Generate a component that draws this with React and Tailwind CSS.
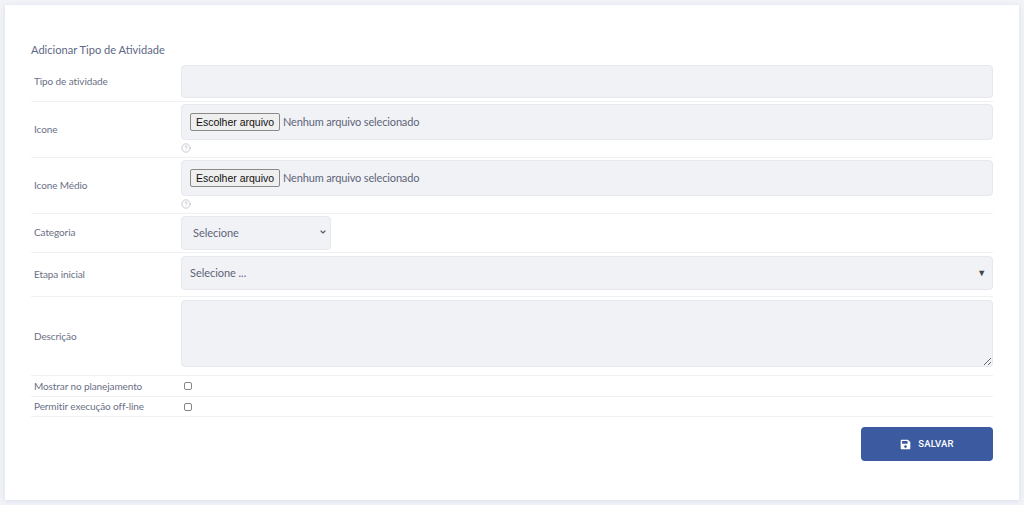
import { FaSave } from 'react-icons/fa';
import { ChevronDown, CircleHelp } from 'lucide-react';

const labelCls = 'w-[150px] shrink-0 pl-[3px] text-[10px] tracking-[-0.1px] text-[#6a7085]';
const fieldCls = 'bg-[#f1f2f6] border border-[#e6e8ef] rounded-[4px] text-[#5e6579]';
const checkCls = 'block appearance-none ml-[3px] w-[8px] h-[8px] bg-white border border-[#85858a] rounded-[2px]';

function FileField() {
  return (
    <div>
      <div className={`${fieldCls} h-[36px] flex items-center pl-[8px] gap-[3px]`}>
        <button className="h-[18px] w-[90px] bg-[#efefef] border border-[#8a8a8a] rounded-[2px] text-[10.5px] leading-none whitespace-nowrap text-[#111] font-['Liberation_Sans',sans-serif]">
          Escolher arquivo
        </button>
        <span className="text-[11px] tracking-[-0.15px] text-[#5e6579]">Nenhum arquivo selecionado</span>
      </div>
      <div className="h-[17px] pt-[3px]">
        <CircleHelp size={10} strokeWidth={1.5} className="text-[#a9adb8]" />
      </div>
    </div>
  );
}

function Row({ label, children, className = '', labelClass = '' }) {
  return (
    <div className={`flex items-center border-b border-[#eef0f4] ${className}`}>
      <div className={`${labelCls} ${labelClass}`}>{label}</div>
      <div className="flex-1 min-w-0">{children}</div>
    </div>
  );
}

export default function App() {
  return (
    <div className="h-[505px] overflow-hidden bg-[#f3f4f9] pt-[5px] pl-[5px] pr-[5px] font-['Lato','Noto_Sans',sans-serif]">
      <div className="w-[1014px] h-[495px] bg-white shadow-[0_1px_6px_rgba(200,205,225,0.6)] pt-[38px] px-[26px]">
        <h3 className="text-[11.1px] leading-[14px] text-[#5e6785] mb-[5px]">Adicionar Tipo de Atividade</h3>

        <Row label="Tipo de atividade" className="pt-[3px] pb-[3px]">
          <input className={`${fieldCls} block w-full h-[33px] outline-none`} />
        </Row>
        <Row label="Icone" className="pt-[2px]" labelClass="pb-[2px]">
          <FileField />
        </Row>
        <Row label="Icone Médio" className="pt-[2px]" labelClass="pb-[2px]">
          <FileField />
        </Row>
        <Row label="Categoria" className="pt-[2px] pb-[2px]" labelClass="pb-[2px]">
          <div className="relative w-[150px]">
            <select className={`${fieldCls} appearance-none block w-full h-[34px] pl-[11px] text-[11px] tracking-[-0.05px] outline-none`}>
              <option>Selecione</option>
            </select>
            <ChevronDown size={8} strokeWidth={3.5} className="absolute right-[4px] top-[12px] text-[#555c70]" />
          </div>
        </Row>
        <Row label="Etapa inicial" className="pt-[3px] pb-[6px]" labelClass="pt-[2px]">
          <div className={`${fieldCls} h-[34px] flex items-center justify-between pl-[8px] pr-[6px] text-[11px] tracking-[-0.05px]`}>
            <span>Selecione ...</span>
            <span className="text-[#444] text-[9px]">▼</span>
          </div>
        </Row>
        <Row label="Descrição" className="pt-[3px] pb-[8px]" labelClass="pt-[6px]">
          <textarea className={`${fieldCls} block w-full h-[67px] outline-none`} />
        </Row>
        <Row label="Mostrar no planejamento" className="h-[21px]">
          <input type="checkbox" className={checkCls} />
        </Row>
        <Row label="Permitir execução off-line" className="h-[20px]">
          <input type="checkbox" className={checkCls} />
        </Row>

        <div className="flex justify-end mt-[10px]">
          <button className="w-[132px] h-[34px] bg-[#3c5a9f] rounded-[4px] flex items-center justify-center gap-[7px] text-white text-[9.5px] font-medium tracking-[0.2px] font-['Roboto',sans-serif]">
            <FaSave size={11} />
            SALVAR
          </button>
        </div>
      </div>
    </div>
  );
}
